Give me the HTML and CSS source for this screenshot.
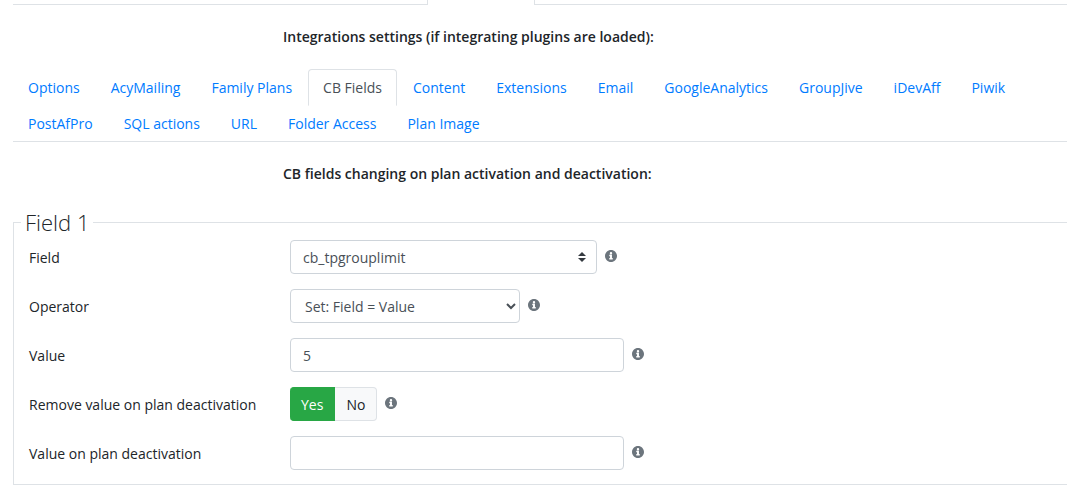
FILE: index.html
```html
<!DOCTYPE html>
<html lang="en">
<head>
  <meta charset="UTF-8">
  <meta name="viewport" content="width=device-width, initial-scale=1">
  <title>Integrations settings</title>
  <link rel="stylesheet" href="styles.css">
</head>
<body>

  <svg class="sprite" aria-hidden="true">
    <symbol id="info" viewBox="8 8 496 496">
      <path d="M256 8C119 8 8 119 8 256s111 248 248 248 248-111 248-248S393 8 256 8zm0 82a50 50 0 1 1 0 100 50 50 0 0 1 0-100zm72 298c0 7-5 12-12 12H196c-7 0-12-5-12-12v-36c0-7 5-12 12-12h20v-76h-20c-7 0-12-5-12-12v-36c0-7 5-12 12-12h88c7 0 12 5 12 12v124h20c7 0 12 5 12 12v36z"/>
    </symbol>
  </svg>

  <main class="page">
    <div class="outer-tabs">
      <div class="outer-before"></div>
      <div class="outer-active"></div>
      <div class="outer-after"></div>
    </div>

    <h2 class="heading">Integrations settings (if integrating plugins are loaded):</h2>

    <nav class="tabs">
      <a class="tab" href="#options">Options</a>
      <a class="tab" href="#acymailing">AcyMailing</a>
      <a class="tab" href="#family">Family Plans</a>
      <a class="tab active" href="#cbfields">CB Fields</a>
      <a class="tab" href="#content">Content</a>
      <a class="tab" href="#extensions">Extensions</a>
      <a class="tab" href="#email">Email</a>
      <a class="tab" href="#analytics">GoogleAnalytics</a>
      <a class="tab" href="#groupjive">GroupJive</a>
      <a class="tab" href="#idevaff">iDevAff</a>
      <a class="tab" href="#piwik">Piwik</a>
      <a class="tab" href="#postafpro">PostAfPro</a>
      <a class="tab" href="#sql">SQL actions</a>
      <a class="tab" href="#url">URL</a>
      <a class="tab" href="#folder">Folder Access</a>
      <a class="tab" href="#image">Plan Image</a>
    </nav>

    <h2 class="heading">CB fields changing on plan activation and deactivation:</h2>

    <fieldset class="group">
      <legend>Field 1</legend>

      <div class="row">
        <label for="field">Field</label>
        <div class="control">
          <div class="custom-select">
            <select id="field" class="input">
              <option>cb_tpgrouplimit</option>
            </select>
            <svg class="arrows" viewBox="0 0 4 5" aria-hidden="true"><path d="M2 0L0 2h4zm0 5L0 3h4z"/></svg>
          </div>
          <svg class="info"><use href="#info"/></svg>
        </div>
      </div>

      <div class="row">
        <label for="operator">Operator</label>
        <div class="control">
          <select id="operator" class="input operator">
            <option>Set: Field = Value</option>
          </select>
          <svg class="info"><use href="#info"/></svg>
        </div>
      </div>

      <div class="row">
        <label for="value">Value</label>
        <div class="control">
          <input type="text" id="value" class="input text" value="5">
          <svg class="info"><use href="#info"/></svg>
        </div>
      </div>

      <div class="row">
        <span id="removeLabel">Remove value on plan deactivation</span>
        <div class="control">
          <div class="toggle" role="radiogroup" aria-labelledby="removeLabel">
            <input type="radio" name="remove" id="removeYes" checked>
            <label for="removeYes">Yes</label>
            <input type="radio" name="remove" id="removeNo">
            <label for="removeNo">No</label>
          </div>
          <svg class="info"><use href="#info"/></svg>
        </div>
      </div>

      <div class="row">
        <label for="offValue">Value on plan deactivation</label>
        <div class="control">
          <input type="text" id="offValue" class="input text">
          <svg class="info"><use href="#info"/></svg>
        </div>
      </div>
    </fieldset>
  </main>

</body>
</html>
```
FILE: styles.css
```css
* {
  box-sizing: border-box;
}

body {
  margin: 0;
  font-family: "Segoe UI", "Open Sans", sans-serif;
  font-size: 14px;
  line-height: 21px;
  color: #212529;
  background: #fff;
  overflow-x: hidden;
}

.sprite {
  display: none;
}

.page {
  padding-left: 13px;
}

/* bottom edge of the main tab bar */
.outer-tabs {
  display: flex;
  height: 5px;
}

.outer-before {
  width: 414px;
  border-bottom: 1px solid #dee2e6;
}

.outer-active {
  width: 108px;
  border: 1px solid #dee2e6;
  border-width: 0 1px;
}

.outer-after {
  flex: 1;
  border-bottom: 1px solid #dee2e6;
}

.heading {
  margin: 0;
  padding: 21px 0 22px 270px;
  font-size: 14px;
  line-height: 21px;
  font-weight: 600;
}

.tabs {
  display: flex;
  flex-wrap: wrap;
  column-gap: 1px;
  border-bottom: 1px solid #dee2e6;
}

.tab {
  margin-bottom: -1px;
  padding: 7px 14px;
  border: 1px solid transparent;
  border-radius: 4px 4px 0 0;
  color: #007bff;
  text-decoration: none;
}

.tab.active {
  color: #495057;
  background: #fff;
  border-color: #dee2e6 #dee2e6 #fff;
}

.group {
  min-width: 0;
  margin: 2px 0 0;
  padding: 4px 0 14px 15px;
  border: 1px solid #dee2e6;
  border-right: 0;
}

legend {
  margin-left: -8px;
  padding: 0 4px;
  font-size: 22px;
  line-height: 28px;
  font-weight: 300;
}

.row {
  display: grid;
  grid-template-columns: 261px 1fr;
  align-items: center;
}

.row + .row {
  margin-top: 15px;
}

.control {
  display: flex;
  align-items: center;
  gap: 8px;
}

.input {
  height: 34px;
  padding: 6px 12px;
  border: 1px solid #ced4da;
  border-radius: 4px;
  background: #fff;
  color: #495057;
  font: inherit;
}

.custom-select {
  position: relative;
  width: 307px;
}

.custom-select .input {
  display: block;
  width: 100%;
  appearance: none;
}

.arrows {
  position: absolute;
  top: 12px;
  right: 11px;
  width: 8px;
  height: 10px;
  fill: #343a40;
  pointer-events: none;
}

.operator {
  width: 230px;
  padding: 6px 0 6px 10px;
}

.text {
  width: 334px;
}

.info {
  width: 12px;
  height: 12px;
  margin-bottom: 3px;
  fill: #6c757d;
}

.toggle {
  display: flex;
  position: relative;
}

.toggle input {
  position: absolute;
  opacity: 0;
}

.toggle label {
  padding: 6px 11px;
  height: 34px;
  border: 1px solid #dee2e6;
  border-left: 0;
  border-radius: 0 4px 4px 0;
  background: #f8f9fa;
}

.toggle label:first-of-type {
  border-radius: 4px 0 0 4px;
}

.toggle input:checked + label {
  border-color: #28a745;
  background: #28a745;
  color: #fff;
}
```
